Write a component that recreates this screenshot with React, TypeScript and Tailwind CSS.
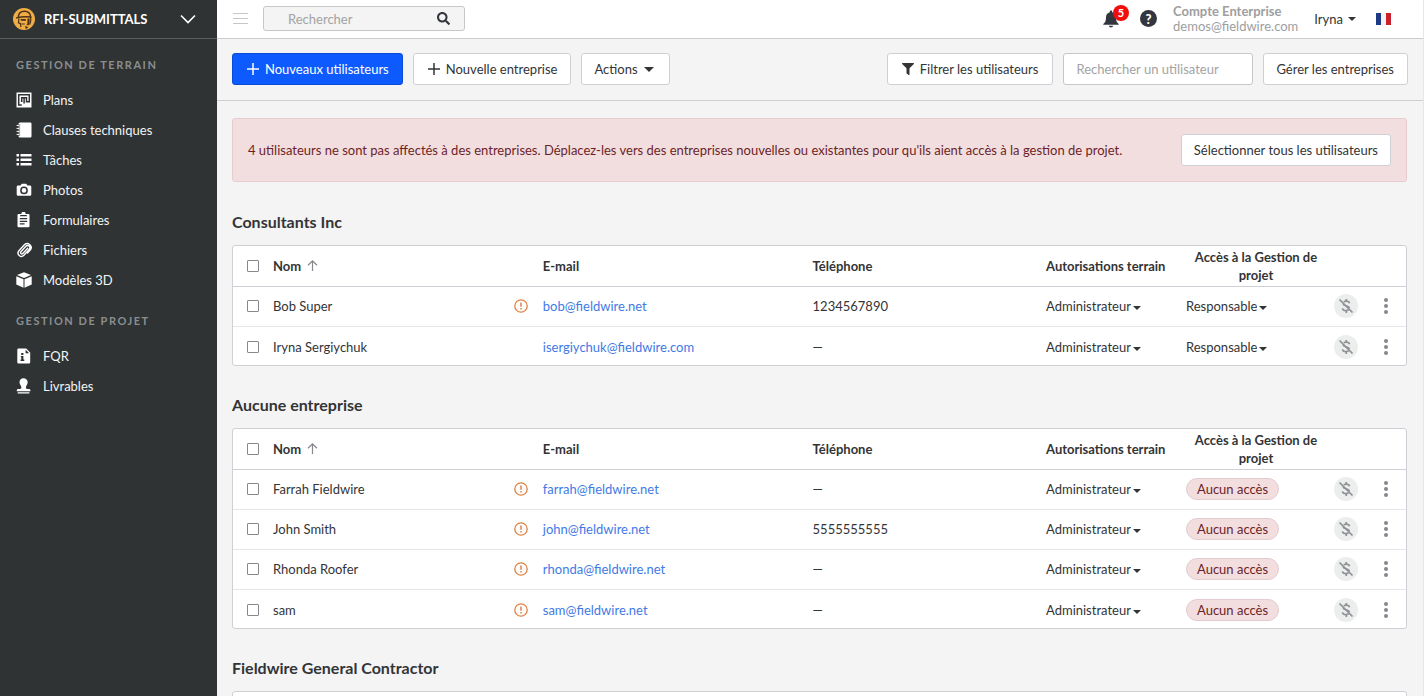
import React, { useState } from "react";
import { FaSearch, FaFilter } from "react-icons/fa";

type User = {
  name: string;
  email: string;
  phone?: string;
  warning?: boolean;
  access: "manager" | "none";
};

type Company = {
  name: string;
  users: User[];
};

const companies: Company[] = [
  {
    name: "Consultants Inc",
    users: [
      { name: "Bob Super", email: "bob@fieldwire.net", phone: "1234567890", warning: true, access: "manager" },
      { name: "Iryna Sergiychuk", email: "isergiychuk@fieldwire.com", access: "manager" },
    ],
  },
  {
    name: "Aucune entreprise",
    users: [
      { name: "Farrah Fieldwire", email: "farrah@fieldwire.net", warning: true, access: "none" },
      { name: "John Smith", email: "john@fieldwire.net", phone: "5555555555", warning: true, access: "none" },
      { name: "Rhonda Roofer", email: "rhonda@fieldwire.net", warning: true, access: "none" },
      { name: "sam", email: "sam@fieldwire.net", warning: true, access: "none" },
    ],
  },
  { name: "Fieldwire General Contractor", users: [] },
];

// Sidebar icons, all on a 16x16 grid
const PlansIcon = () => (
  <svg viewBox="0 0 16 16" className="size-4" aria-hidden="true">
    <path fill="#fff" d="M.5.5h15v15H.5z" />
    <path fill="none" stroke="#2f3334" strokeWidth="1.5" d="M5.8 13H2.700V2.700h10.600v7H10.500V5.700H5.700v4.200M8.100 5.700v5.800" />
  </svg>
);

const SpecsIcon = () => (
  <svg viewBox="0 0 16 16" className="size-4" aria-hidden="true">
    <path fill="#fff" d="M4 .5h10.300A1.200 1.200 0 0 1 15.500 1.700v12.600a1.200 1.200 0 0 1-1.200 1.200H4a1.500 1.500 0 0 1-1.500-1.500V2A1.500 1.500 0 0 1 4 .5z" />
    <path fill="none" stroke="#2f3334" strokeWidth="2" d="M1.500 3.400h2.600M1.500 6.400h2.600M1.500 9.400h2.600M1.500 12.400h2.600" />
    <path fill="none" stroke="#fff" strokeWidth="1" strokeLinecap="round" d="M1 3.400h2.400M1 6.400h2.400M1 9.400h2.400M1 12.400h2.400" />
  </svg>
);

const TasksIcon = () => (
  <svg viewBox="0 0 16 16" className="size-4" aria-hidden="true">
    <path fill="#fff" d="M.5 2H3v2.500H.5zM4.500 2h11v2.500h-11zM.5 6.500H3V9H.5zM4.500 6.500h11V9h-11zM.5 11H3v2.500H.5zM4.500 11h11v2.500h-11z" />
  </svg>
);

const PhotosIcon = () => (
  <svg viewBox="0 0 16 16" className="size-4" aria-hidden="true">
    <path fill="#fff" d="M5.800 1.700h4.400l1.300 1.800H14a1.300 1.300 0 0 1 1.300 1.300v7.700a1.300 1.300 0 0 1-1.300 1.300H2A1.300 1.300 0 0 1 .7 12.500V4.800A1.300 1.300 0 0 1 2 3.500h2.500z" />
    <circle cx="8" cy="8.400" r="3.100" fill="none" stroke="#2f3334" strokeWidth="1.500" />
  </svg>
);

const FormsIcon = () => (
  <svg viewBox="0 0 16 16" className="size-4" aria-hidden="true">
    <path fill="#fff" d="M2.500 2h2.800a2.200 2.200 0 0 1 4.400 0h2.800a1 1 0 0 1 1 1v11.200a1 1 0 0 1-1 1h-10a1 1 0 0 1-1-1V3a1 1 0 0 1 1-1z" />
    <path fill="none" stroke="#2f3334" strokeWidth="1.200" d="M4.200 3.600h6.600M3.800 6.700h7.400M3.800 9.300h7.400M3.800 11.900h4.800" />
  </svg>
);

const FilesIcon = () => (
  <svg viewBox="0 0 16 16" className="size-4" fill="none" stroke="#fff" strokeWidth="1.400" strokeLinecap="round" aria-hidden="true">
    <path d="M11.700 6.200l-4.900 5.300a1.300 1.300 0 0 1-1.900-1.800l5-5.500a2.300 2.300 0 0 1 3.400 3.100l-5.400 6a3.400 3.400 0 0 1-5-4.600l5.700-6.200a4 4 0 0 1 5.800 5.400l-2.900 3.200" />
  </svg>
);

const CubeIcon = () => (
  <svg viewBox="0 0 16 16" className="size-4" fill="#fff" aria-hidden="true">
    <path d="M8 .3l7 2.800-7 3L1 3.100zM.3 4.200l7.200 3.100v8.400L.3 12.400zM15.700 4.200L8.500 7.300v8.400l7.200-3.300z" />
  </svg>
);

const RfiIcon = () => (
  <svg viewBox="0 0 16 16" className="size-4" aria-hidden="true">
    <path fill="#fff" d="M2.500.5h7.700l4 4v9.800a1.200 1.200 0 0 1-1.200 1.200H2.500a1.200 1.200 0 0 1-1.200-1.200V1.700A1.200 1.200 0 0 1 2.500.5z" />
    <path fill="#2f3334" d="M9.600 1.700v3.600h3.600zM5.200 5h2.200v2H5.200zM4.800 8h2.600v3.600h.9v1.300H4.500v-1.300h.8V9.300h-.5z" />
  </svg>
);

const StampIcon = () => (
  <svg viewBox="0 0 16 16" className="size-4" fill="#fff" aria-hidden="true">
    <path d="M7.500.3a4.200 4.200 0 0 1 4.200 4.200c0 2-1.800 3-1.800 5 0 1 .5 1.400 1.400 1.400h1.600c.9 0 1.500.6 1.500 1.400v.9H.8v-.9c0-.8.6-1.400 1.500-1.400H4c.9 0 1.400-.4 1.400-1.400 0-2-1.900-3-1.900-5A4.200 4.200 0 0 1 7.500.3zM1.700 14.200h11.700v1.400H1.700z" />
  </svg>
);

const Logo = () => (
  <svg viewBox="0 0 24 24" className="size-6" aria-hidden="true">
    <circle cx="12" cy="12" r="11" fill="#f0ad45" />
    <g fill="none" stroke="#4a3115" strokeLinecap="round">
      <path strokeWidth="1.400" d="M6.300 9.600C6.600 6 9.200 4.200 12.400 4.200c3.400 0 5.900 2 6.200 5.400" />
      <path strokeWidth="1.500" d="M4.600 10.900c4.500-1.200 9.300-1.400 14.300-.8" />
      <path strokeWidth="1.200" d="M6.900 11.800l-.4 4.100 1.900.8.500 3M18.700 10.500c.4 2.600.1 4.800-.9 6.700" />
    </g>
    <path fill="#4a3115" d="M8.500 12h5.200l.3 1.700H9zM15.500 11.400h2.100v5.200l-1.300 1.800-1.800-.3.900-1.700zM9.200 16.400h3.600v1H9.700zM13.300 18.700l3.200 1.900-3 1.500z" />
  </svg>
);

const BellIcon = () => (
  <svg viewBox="0 0 16 18" className="h-[18px] w-4" fill="currentColor" aria-hidden="true">
    <path d="M8 .5c.7 0 1.200.5 1.200 1.200v.5c2.400.6 3.800 2.600 3.800 5.100 0 3.500.7 5.300 2.700 6.700v.8H.3V14C2.300 12.600 3 10.800 3 7.300c0-2.500 1.400-4.500 3.800-5.100v-.5C6.800 1 7.300.5 8 .5zM5.800 15.800h4.400c-.3 1-1.100 1.700-2.200 1.700s-1.900-.7-2.200-1.700z" />
  </svg>
);

const Caret = ({ className = "" }: { className?: string }) => (
  <svg viewBox="0 0 8 4" className={`pointer-events-none h-1 w-2 shrink-0 ${className}`} fill="currentColor" aria-hidden="true">
    <path d="M0 0h8L4 4z" />
  </svg>
);

const PlusIcon = () => (
  <svg viewBox="0 0 12 12" className="size-3" stroke="currentColor" strokeWidth="1.500" aria-hidden="true">
    <path d="M6 0v12M0 6h12" />
  </svg>
);

const WarningIcon = () => (
  <svg viewBox="0 0 14 14" className="size-3.5" fill="none" stroke="#e08243" strokeWidth="1.300" role="img" aria-label="Invitation en attente">
    <circle cx="7" cy="7" r="6.200" />
    <path strokeWidth="1.500" d="M7 3.500v4.200M7 8.900v1.500" />
  </svg>
);

const NoBillingIcon = () => (
  <svg viewBox="0 0 24 24" className="size-6" aria-hidden="true">
    <circle cx="12" cy="12" r="12" fill="#eceeee" />
    <g fill="none" stroke="#8f9294" strokeWidth="1.700">
      <path d="M12.300 5v2.200M12.300 16.500V19M15.500 9.200c-.3-1.300-1.600-2-3.300-2-1 0-1.800.2-2.400.7M8.400 14.300c.3 1.500 1.700 2.300 3.600 2.300 1.200 0 2.200-.3 2.800-.9M9 9.600c.4 1.600 2 1.900 3.300 2.300 1.500.4 2.900.9 3.200 2.200" />
      <path d="M5.500 5.500l13 13" />
    </g>
  </svg>
);

const fieldLinks = [
  { label: "Plans", icon: <PlansIcon /> },
  { label: "Clauses techniques", icon: <SpecsIcon /> },
  { label: "Tâches", icon: <TasksIcon /> },
  { label: "Photos", icon: <PhotosIcon /> },
  { label: "Formulaires", icon: <FormsIcon /> },
  { label: "Fichiers", icon: <FilesIcon /> },
  { label: "Modèles 3D", icon: <CubeIcon /> },
];

const projectLinks = [
  { label: "FQR", icon: <RfiIcon /> },
  { label: "Livrables", icon: <StampIcon /> },
];

const NavSection = ({ title, links }: { title: string; links: { label: string; icon: React.ReactNode }[] }) => (
  <section>
    <h2 className="px-4 pt-[18px] pb-3 text-[11px] leading-4 font-bold tracking-[0.14em] text-[#8b8e8f] uppercase">{title}</h2>
    <ul>
      {links.map((link) => (
        <li key={link.label}>
          <a href="#" className="flex h-[30px] items-center gap-[11px] px-4 text-[#f4f4f4] hover:bg-white/10">
            {link.icon}
            {link.label}
          </a>
        </li>
      ))}
    </ul>
  </section>
);

const Sidebar = () => (
  <aside className="w-[217px] shrink-0 bg-[#2f3334]">
    <button type="button" className="flex h-[39px] w-full items-center border-b border-[#5b5e5f] pr-[21px] pl-3 text-white">
      <Logo />
      <span className="ml-2 flex-1 text-left font-bold">RFI-SUBMITTALS</span>
      <svg viewBox="0 0 16 10" className="h-2.5 w-4" fill="none" stroke="currentColor" strokeWidth="1.600" aria-hidden="true">
        <path d="M1 1.500l7 7 7-7" />
      </svg>
    </button>
    <nav>
      <NavSection title="Gestion de terrain" links={fieldLinks} />
      <NavSection title="Gestion de projet" links={projectLinks} />
    </nav>
  </aside>
);

const TopBar = () => (
  <header className="flex h-[39px] shrink-0 items-center border-b border-[#cbcbcd] bg-white pr-8 pb-px pl-4">
    <button type="button" aria-label="Menu" className="text-[#c6c7c9]">
      <svg viewBox="0 0 15 12" className="h-3 w-[15px]" stroke="currentColor" aria-hidden="true">
        <path d="M0 .5h15M0 5.500h15M0 10.500h15" />
      </svg>
    </button>
    <label className="ml-[15px] flex h-[25px] w-[202px] items-center rounded-[3px] border border-[#c6c7c9] bg-[#f4f4f4] pr-3.5 pl-6">
      <input type="search" aria-label="Rechercher" placeholder="Rechercher" className="min-w-0 flex-1 bg-transparent outline-none placeholder:text-[#a2a3a5]" />
      <FaSearch className="size-[13px] text-[#33363a]" />
    </label>
    <div className="ml-auto flex items-center">
      <button type="button" aria-label="Notifications" className="relative text-[#33363f]">
        <BellIcon />
        <span className="absolute -top-[5px] left-2.5 flex size-4 items-center justify-center rounded-full bg-[#f20d0d] text-[11px] font-bold text-white">5</span>
      </button>
      <button type="button" aria-label="Aide" className="ml-[21px] flex size-[17px] items-center justify-center rounded-full bg-[#33363f] text-[13px] leading-4 font-black text-white">
        ?
      </button>
      <div className="ml-4 leading-[15px] text-[#9d9ea0]">
        <div className="font-bold">Compte Enterprise</div>
        <div>demos@fieldwire.com</div>
      </div>
      <button type="button" className="ml-4 flex items-center gap-[5px]">
        Iryna
        <Caret />
      </button>
      <button type="button" aria-label="Français" className="ml-5">
        <svg viewBox="0 0 15 12" className="h-3 w-[15px]" aria-hidden="true">
          <path fill="#1d3a86" d="M0 0h5v12H0z" />
          <path fill="#f3f3f5" d="M5 0h5v12H5z" />
          <path fill="#c8202c" d="M10 0h5v12h-5z" />
        </svg>
      </button>
    </div>
  </header>
);

const buttonClass = "flex h-8 items-center rounded-[3px] border border-[#cfd0d6] bg-white whitespace-nowrap";

const Toolbar = () => {
  const [search, setSearch] = useState("");

  return (
    <div className="flex shrink-0 items-center gap-2.5 border-b border-[#cfd0d6] pt-3.5 pr-[15px] pb-[15px] pl-[15px]">
      <button type="button" className="flex h-8 items-center gap-1.5 rounded-[3px] border border-[#0b4bd6] bg-[#0d5bff] pr-[13px] pl-3.5 whitespace-nowrap text-white">
        <PlusIcon />
        Nouveaux utilisateurs
      </button>
      <button type="button" className={`${buttonClass} gap-1.5 pr-[13px] pl-3.5`}>
        <PlusIcon />
        Nouvelle entreprise
      </button>
      <button type="button" className={`${buttonClass} gap-1.5 pr-[15px] pl-3`}>
        Actions
        <svg viewBox="0 0 10 5" className="h-[5px] w-2.5" fill="currentColor" aria-hidden="true">
          <path d="M0 0h10L5 5z" />
        </svg>
      </button>
      <button type="button" className={`${buttonClass} ml-auto gap-1.5 px-3.5`}>
        <FaFilter className="size-3" />
        Filtrer les utilisateurs
      </button>
      <input
        type="text"
        aria-label="Rechercher un utilisateur"
        placeholder="Rechercher un utilisateur"
        value={search}
        onChange={(e) => setSearch(e.target.value)}
        className="h-8 w-[190px] rounded-[3px] border border-[#c6c7cb] bg-white px-3 outline-none placeholder:text-[#a2a3a5]"
      />
      <button type="button" className={`${buttonClass} pr-[13px] pl-3`}>
        Gérer les entreprises
      </button>
    </div>
  );
};

const Checkbox = ({ label }: { label: string }) => (
  <input type="checkbox" aria-label={label} className="block size-3 appearance-none rounded-[1px] border border-[#85888d] bg-white checked:bg-[#0d5bff]" />
);

const InlineSelect = ({ label, options }: { label: string; options: string[] }) => (
  <div className="flex items-center">
    <select aria-label={label} className="field-sizing-content appearance-none bg-transparent outline-none">
      {options.map((option) => (
        <option key={option}>{option}</option>
      ))}
    </select>
    <Caret className="mt-1 ml-0.5" />
  </div>
);

const UserRow = ({ user }: { user: User }) => (
  <tr className="h-10 border-b border-[#e6e7e9] last:h-[39px] last:border-b-0 last:[&>td]:pt-0.5">
    <td className="pl-3.5">
      <Checkbox label={user.name} />
    </td>
    <td>
      <div className="flex items-center justify-between pr-[15px]">
        {user.name}
        {user.warning && <WarningIcon />}
      </div>
    </td>
    <td>
      <a href={`mailto:${user.email}`} className="text-[#3f7ae6]">
        {user.email}
      </a>
    </td>
    <td>{user.phone || "—"}</td>
    <td>
      <InlineSelect label="Autorisations terrain" options={["Administrateur", "Membre"]} />
    </td>
    <td>
      {user.access === "manager" ? (
        <InlineSelect label="Accès à la Gestion de projet" options={["Responsable", "Membre"]} />
      ) : (
        <button type="button" className="block h-[22px] rounded-full border border-[#e3cbcf] bg-[#f2dede] px-2.5 leading-5 text-[#6d1f28]">
          Aucun accès
        </button>
      )}
    </td>
    <td>
      <button type="button" aria-label="Non facturé" className="ml-2 block">
        <NoBillingIcon />
      </button>
    </td>
    <td>
      <button type="button" aria-label="Plus d'options" className="mx-auto block">
        <svg viewBox="0 0 4 16" className="h-4 w-1" fill="#85888d" aria-hidden="true">
          <circle cx="2" cy="2" r="2" />
          <circle cx="2" cy="8" r="2" />
          <circle cx="2" cy="14" r="2" />
        </svg>
      </button>
    </td>
  </tr>
);

const UsersTable = ({ users }: { users: User[] }) => (
  <table className="w-full table-fixed border-collapse">
    <colgroup>
      <col className="w-10" />
      <col className="w-[23%]" />
      <col className="w-[23%]" />
      <col />
      <col className="w-[140px]" />
      <col className="w-[140px]" />
      <col className="w-10" />
      <col className="w-10" />
    </colgroup>
    <thead>
      <tr className="h-10 border-b border-[#cfd0d6] text-left">
        <th className="pl-3.5">
          <Checkbox label="Tout sélectionner" />
        </th>
        <th>
          <button type="button" className="flex items-center gap-1.5 font-bold">
            Nom
            <svg viewBox="0 0 11 11" className="size-[11px]" fill="none" stroke="#85888d" strokeWidth="1.200" aria-hidden="true">
              <path d="M5.500 11V1M1 5.300L5.500.9 10 5.300" />
            </svg>
          </button>
        </th>
        <th>E-mail</th>
        <th>Téléphone</th>
        <th>Autorisations terrain</th>
        <th className="text-center">Accès à la Gestion de projet</th>
        <th></th>
        <th></th>
      </tr>
    </thead>
    <tbody>
      {users.map((user) => (
        <UserRow key={user.email} user={user} />
      ))}
    </tbody>
  </table>
);

const CompanySection = ({ company }: { company: Company }) => (
  <section>
    <h2 className="pt-7 pb-3 text-base leading-[22px] font-bold">{company.name}</h2>
    <div className="min-h-10 rounded-[3px] border border-[#cfd0d6] bg-white">
      {company.users.length > 0 && <UsersTable users={company.users} />}
    </div>
  </section>
);

const App: React.FC = () => {
  return (
    <div className="flex h-screen overflow-hidden bg-[#f4f4f5] font-['Lato',sans-serif] text-[13px] leading-[18px] text-[#333436]">
      <Sidebar />
      <div className="flex min-w-0 flex-1 flex-col border-r border-[#e6e7e9]">
        <TopBar />
        <Toolbar />
        <main className="flex-1 overflow-y-auto pt-[17px] pr-4 pl-[15px] [scrollbar-width:none]">
          <div role="alert" className="mb-px flex items-center justify-between rounded-[3px] border border-[#e6ccd1] bg-[#f2dede] p-[15px] text-[#6d1f28]">
            <p>
              4 utilisateurs ne sont pas affectés à des entreprises. Déplacez-les vers des entreprises nouvelles ou existantes pour qu'ils aient accès à la gestion de projet.
            </p>
            <button type="button" className={`${buttonClass} px-3 text-[#333436]`}>
              Sélectionner tous les utilisateurs
            </button>
          </div>
          {companies.map((company) => (
            <CompanySection key={company.name} company={company} />
          ))}
        </main>
      </div>
    </div>
  );
};

export default App;
